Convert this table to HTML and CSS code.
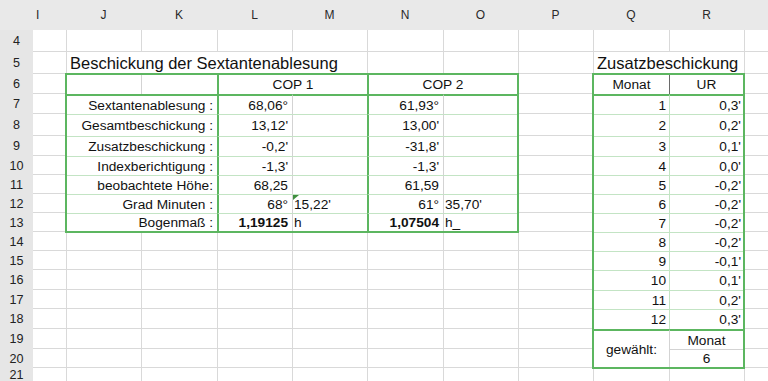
FILE: index.html
```html
<!DOCTYPE html>
<html lang="de">
<head>
<meta charset="utf-8">
<title>Beschickung der Sextantenablesung</title>
<link rel="stylesheet" href="styles.css">
</head>
<body>
<div class="sheet">
  <div class="colhead">
    <span></span><span class="ci">I</span><span>J</span><span>K</span><span>L</span><span>M</span><span>N</span><span>O</span><span>P</span><span>Q</span><span>R</span><span></span>
  </div>
  <div class="row r4"><span class="rh">4</span><span class="cells"></span></div>
  <div class="row r5"><span class="rh">5</span><span class="cells"></span></div>
  <div class="row r6"><span class="rh">6</span><span class="cells"></span></div>
  <div class="row r7"><span class="rh">7</span><span class="cells"></span></div>
  <div class="row r8"><span class="rh">8</span><span class="cells"></span></div>
  <div class="row r9"><span class="rh">9</span><span class="cells"></span></div>
  <div class="row r10"><span class="rh">10</span><span class="cells"></span></div>
  <div class="row r11"><span class="rh">11</span><span class="cells"></span></div>
  <div class="row r12"><span class="rh">12</span><span class="cells"></span></div>
  <div class="row r13"><span class="rh">13</span><span class="cells"></span></div>
  <div class="row r14"><span class="rh">14</span><span class="cells"></span></div>
  <div class="row r15"><span class="rh">15</span><span class="cells"></span></div>
  <div class="row r16"><span class="rh">16</span><span class="cells"></span></div>
  <div class="row r17"><span class="rh">17</span><span class="cells"></span></div>
  <div class="row r18"><span class="rh">18</span><span class="cells"></span></div>
  <div class="row r19"><span class="rh">19</span><span class="cells"></span></div>
  <div class="row r20"><span class="rh">20</span><span class="cells"></span></div>
  <div class="row r21 last"><span class="rh">21</span><span class="cells"></span></div>

  <div class="title title-left">Beschickung der Sextantenablesung</div>
  <div class="title title-right">Zusatzbeschickung</div>

  <div class="tbl cop">
    <div class="c"></div>
    <div class="c thin"></div>
    <div class="c span2 thick ctr">COP 1</div>
    <div class="c span2 thick ctr">COP 2</div>

    <div class="c lab top">Sextantenablesung :</div>
    <div class="c num thick top">68,06°</div>
    <div class="c txt thin top"></div>
    <div class="c num thick top">61,93°</div>
    <div class="c txt thin top"></div>

    <div class="c lab sep">Gesamtbeschickung :</div>
    <div class="c num thick sep">13,12'</div>
    <div class="c txt thin sep"></div>
    <div class="c num thick sep">13,00'</div>
    <div class="c txt thin sep"></div>

    <div class="c lab sep">Zusatzbeschickung :</div>
    <div class="c num thick sep">-0,2'</div>
    <div class="c txt thin sep"></div>
    <div class="c num thick sep">-31,8'</div>
    <div class="c txt thin sep"></div>

    <div class="c lab sep">Indexberichtigung :</div>
    <div class="c num thick sep">-1,3'</div>
    <div class="c txt thin sep"></div>
    <div class="c num thick sep">-1,3'</div>
    <div class="c txt thin sep"></div>

    <div class="c lab sep">beobachtete Höhe:</div>
    <div class="c num thick sep">68,25</div>
    <div class="c txt thin sep"></div>
    <div class="c num thick sep">61,59</div>
    <div class="c txt thin sep"></div>

    <div class="c lab sep">Grad Minuten :</div>
    <div class="c num thick sep">68°</div>
    <div class="c txt thin sep note">15,22'</div>
    <div class="c num thick sep">61°</div>
    <div class="c txt thin sep">35,70'</div>

    <div class="c lab sep">Bogenmaß :</div>
    <div class="c num thick sep bold">1,19125</div>
    <div class="c txt thin sep">h</div>
    <div class="c num thick sep bold">1,07504</div>
    <div class="c txt thin sep">h_</div>
  </div>

  <div class="tbl zus">
    <div class="c ctr">Monat</div>
    <div class="c ctr dark">UR</div>

    <div class="c num2 top">1</div><div class="c num2 lg top">0,3'</div>
    <div class="c num2 sep">2</div><div class="c num2 lg sep">0,2'</div>
    <div class="c num2 sep">3</div><div class="c num2 lg sep">0,1'</div>
    <div class="c num2 sep">4</div><div class="c num2 lg sep">0,0'</div>
    <div class="c num2 sep">5</div><div class="c num2 lg sep">-0,2'</div>
    <div class="c num2 sep">6</div><div class="c num2 lg sep">-0,2'</div>
    <div class="c num2 sep">7</div><div class="c num2 lg sep">-0,2'</div>
    <div class="c num2 sep">8</div><div class="c num2 lg sep">-0,2'</div>
    <div class="c num2 sep">9</div><div class="c num2 lg sep">-0,1'</div>
    <div class="c num2 sep">10</div><div class="c num2 lg sep">0,1'</div>
    <div class="c num2 sep">11</div><div class="c num2 lg sep">0,2'</div>
    <div class="c num2 sep">12</div><div class="c num2 lg sep">0,3'</div>

    <div class="c ctr top rows2">gewählt:</div>
    <div class="c ctr top thin">Monat</div>
    <div class="c ctr thin gsep">6</div>
  </div>
</div>
</body>
</html>
```

FILE: styles.css
```css
* {
  box-sizing: border-box;
  margin: 0;
  padding: 0;
}

html, body {
  background: #ffffff;
}

body {
  margin: 0;
  overflow: hidden;
  font-family: "Liberation Sans", Arial, Helvetica, sans-serif;
  font-size: 13.7px;
  color: #111111;
}

.sheet {
  --cols: 33px 33px 75px 76px 75px 75px 76px 75px 75px 76px 75px 24px;
  --green: #5cb660;
  --lgreen: #c3e4c4;
  --grid: #d9d9d9;
  display: grid;
  width: 768px;
  height: 381px;
  grid-template-columns: var(--cols);
  grid-template-rows: 30px 22px 22px 20px 20px 22px 20px 19px 19px 19px 19px 19px 19px 20px 19px 20px 20px 19px 13px;
  overflow: hidden;
}

/* column header */
.colhead {
  grid-column: 1 / -1;
  grid-row: 1;
  display: grid;
  grid-template-columns: var(--cols);
  background: #e9e9e9;
  font-size: 12px;
  color: #2a2a2a;
}

.colhead span {
  display: flex;
  align-items: center;
  justify-content: center;
}

.colhead .ci {
  justify-content: flex-start;
  padding-left: 3px;
}

/* sheet rows */
.row {
  grid-column: 1 / -1;
  display: grid;
  grid-template-columns: 33px 1fr;
}

.r4 { grid-row: 2; }
.r5 { grid-row: 3; }
.r6 { grid-row: 4; }
.r7 { grid-row: 5; }
.r8 { grid-row: 6; }
.r9 { grid-row: 7; }
.r10 { grid-row: 8; }
.r11 { grid-row: 9; }
.r12 { grid-row: 10; }
.r13 { grid-row: 11; }
.r14 { grid-row: 12; }
.r15 { grid-row: 13; }
.r16 { grid-row: 14; }
.r17 { grid-row: 15; }
.r18 { grid-row: 16; }
.r19 { grid-row: 17; }
.r20 { grid-row: 18; }
.r21 { grid-row: 19; }

.rh {
  background: #e6e6e6;
  display: flex;
  align-items: center;
  justify-content: center;
  font-size: 12.6px;
  color: #222222;
}

.cells {
  border-bottom: 1px solid var(--grid);
  background: linear-gradient(to right,
    transparent 33px, var(--grid) 33px 34px,
    transparent 34px 108px, var(--grid) 108px 109px,
    transparent 109px 184px, var(--grid) 184px 185px,
    transparent 185px 259px, var(--grid) 259px 260px,
    transparent 260px 334px, var(--grid) 334px 335px,
    transparent 335px 410px, var(--grid) 410px 411px,
    transparent 411px 485px, var(--grid) 485px 486px,
    transparent 486px 560px, var(--grid) 560px 561px,
    transparent 561px 636px, var(--grid) 636px 637px,
    transparent 637px 711px, var(--grid) 711px 712px,
    transparent 712px);
}

.row.last .cells {
  border-bottom: none;
}

/* titles */
.title {
  grid-row: 3;
  display: flex;
  align-items: center;
  padding-left: 3px;
  padding-top: 1px;
  margin: 0 0 1px 1px;
  background: #ffffff;
  font-size: 16.5px;
  color: #111111;
  white-space: nowrap;
}

.title-left {
  grid-column: 3 / 7;
  margin-right: 1px;
}

.title-right {
  grid-column: 10 / 12;
  margin-right: 1px;
}

/* tables */
.tbl {
  display: grid;
  margin: -1px;
  border: 2px solid var(--green);
  background: #ffffff;
}

.cop {
  grid-column: 3 / 9;
  grid-row: 4 / 12;
  grid-template-columns: 74px 76px 75px 75px 76px 74px;
  grid-template-rows: 19px 20px 22px 20px 19px 19px 19px 18px;
}

.zus {
  grid-column: 10 / 12;
  grid-row: 4 / 19;
  grid-template-columns: 75px 74px;
  grid-template-rows: 19px 20px 22px 20px 19px 19px 19px 19px 19px 19px 20px 19px 20px 20px 18px;
}

.c {
  display: flex;
  align-items: center;
  white-space: nowrap;
  min-width: 0;
  position: relative;
}

.span2 {
  grid-column: span 2;
}

.rows2 {
  grid-row: span 2;
}

.lab {
  grid-column: span 2;
  justify-content: flex-end;
  padding-right: 4px;
}

.num {
  justify-content: flex-end;
  padding-right: 4px;
}

.num2 {
  justify-content: flex-end;
  padding-right: 3px;
}

.zus .lg.num2 {
  padding-right: 2px;
}

.txt {
  justify-content: flex-start;
  padding-left: 1px;
}

.ctr {
  justify-content: center;
}

.bold {
  font-weight: bold;
}

.thick {
  border-left: 2px solid var(--green);
}

.thin {
  border-left: 1px solid #d3d3d3;
}

.lg {
  border-left: 1px solid var(--lgreen);
}

.dark {
  border-left: 1px solid #6a6a6a;
}

.top {
  border-top: 2px solid var(--green);
}

.sep {
  border-top: 1px solid var(--lgreen);
}

.gsep {
  border-top: 1px solid #d3d3d3;
}

/* small comment marker in the corner of a cell */
.note::before {
  content: "";
  position: absolute;
  top: 0;
  left: 0;
  border-top: 5px solid #3f8f3f;
  border-right: 6px solid transparent;
}
```
